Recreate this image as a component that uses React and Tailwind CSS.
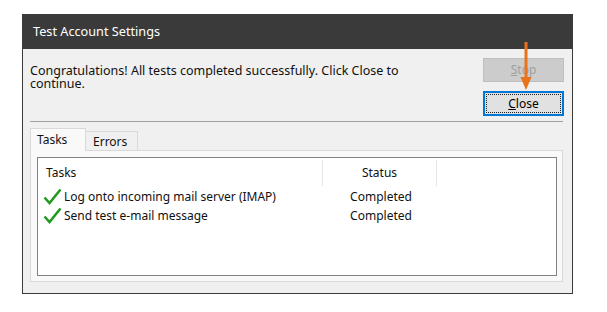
import React from "react";

function Check() {
  return (
    <svg width="19" height="17" viewBox="0 0 19 17" className="shrink-0">
      <path d="M1.5 9.5 L6.5 15 L17.5 1.5" fill="none" stroke="#1f9a1f" strokeWidth="2.5" strokeLinejoin="miter" />
    </svg>
  );
}

export default function App() {
  return (
    <div
      className="w-[607px] h-[312px] bg-white pt-[14px] pl-[22px] relative text-[12px] text-[#111]"
      style={{ fontFamily: '"Noto Sans", "Open Sans", sans-serif' }}
    >
      <div className="w-[551px] h-[280px] flex flex-col border border-[#3a3a3a] bg-[#f0f0f0]">
        <div className="h-[34px] bg-[#3a3a3a] text-white text-[12.7px] flex items-center pl-[10px] shrink-0">
          Test Account Settings
        </div>
        <div className="flex pl-[7px] pr-[8px] pt-[9px]">
          <div className="flex-1 leading-[13px] pt-[6px] text-[12.5px]">
            <div>Congratulations! All tests completed successfully. Click Close to</div>
            <div>continue.</div>
          </div>
          <div className="flex flex-col gap-[9px] w-[81px]">
            <div className="h-[24px] bg-[#cccccc] border border-[#bfbfbf] flex items-center justify-center text-[#a0a0a0]">
              <span><span className="underline">S</span>top</span>
            </div>
            <div className="h-[25px] bg-[#e1e1e1] border-2 border-[#0078d7] p-[1px]">
              <div className="h-full border border-dotted border-[#222] flex items-center justify-center text-black">
                <span><span className="underline">C</span>lose</span>
              </div>
            </div>
          </div>
        </div>
        <div className="mt-[5px] ml-[7px] mr-[9px] border-t border-[#a0a0a0]" />
        <div className="ml-[7px] mr-[9px] mt-[6px] flex flex-col flex-1 mb-[11px]">
          <div className="flex items-end h-[22px]">
            <div className="h-[23px] w-[56px] bg-[#f9f9f9] border border-b-0 border-[#d9d9d9] flex items-center pl-[6px] relative z-10 -mb-px">
              Tasks
            </div>
            <div className="h-[19px] w-[52px] bg-[#f0f0f0] border border-l-0 border-b-0 border-[#d9d9d9] flex items-center pl-[7px] pt-[2px]">
              Errors
            </div>
          </div>
          <div className="flex-1 bg-[#f9f9f9] border border-[#d9d9d9] pt-[6px] pl-[6px] pr-[5px] pb-[5px] flex">
            <div className="flex-1 bg-white border border-[#828282]">
              <div className="flex h-[29px] items-stretch">
                <div className="w-[285px] flex items-center pl-[8px] border-r border-[#e5e5e5] mt-[2px] mb-[1px]">Tasks</div>
                <div className="w-[114px] flex items-center justify-center border-r border-[#e5e5e5] mt-[2px] mb-[1px]">Status</div>
                <div className="flex-1" />
              </div>
              <div className="flex h-[19px] items-center">
                <div className="w-[286px] flex items-center pl-[5px] gap-[2px]">
                  <Check />
                  <span>Log onto incoming mail server (IMAP)</span>
                </div>
                <div className="w-[114px] text-center">Completed</div>
              </div>
              <div className="flex h-[19px] items-center">
                <div className="w-[286px] flex items-center pl-[5px] gap-[2px]">
                  <Check />
                  <span>Send test e-mail message</span>
                </div>
                <div className="w-[114px] text-center">Completed</div>
              </div>
            </div>
          </div>
        </div>
      </div>
      <svg className="absolute left-[519px] top-[42px]" width="14" height="49" viewBox="0 0 14 49">
        <rect x="5.5" y="0" width="3" height="38" fill="#e8731c" />
        <polygon points="1.5,35 12.5,35 7,48" fill="#e8731c" />
      </svg>
    </div>
  );
}
